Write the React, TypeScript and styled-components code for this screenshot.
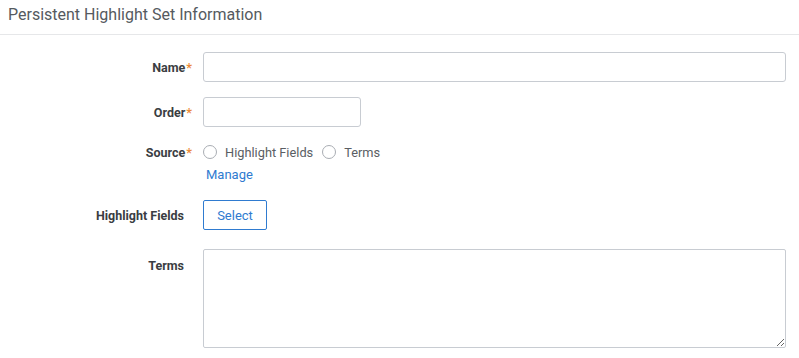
import styled, { createGlobalStyle } from "styled-components";

const GlobalStyle = createGlobalStyle`
  body {
    margin: 0;
    background: #ffffff;
    font-family: Roboto, "Liberation Sans", Arial, sans-serif;
  }
`;

const Page = styled.div`
  width: 799px;
`;

const Header = styled.div`
  height: 35px;
  padding: 0 8px 6px;
  display: flex;
  align-items: center;
  border-bottom: 1px solid #e6e7e9;
  box-sizing: border-box;
  font-size: 16px;
  color: #555a60;
`;

const Form = styled.div`
  padding: 17px 13px 0 0;
  display: flex;
  flex-direction: column;
`;

const Row = styled.div<{ $gap: number; $top?: boolean }>`
  display: grid;
  grid-template-columns: 192px 1fr;
  column-gap: 11px;
  align-items: ${(p) => (p.$top ? "start" : "center")};
  margin-bottom: ${(p) => p.$gap}px;
`;

const Label = styled.div<{ $required?: boolean; $padTop?: number }>`
  text-align: right;
  font-size: 12.5px;
  font-weight: 700;
  color: #3a3d42;
  padding-right: ${(p) => (p.$required ? 0 : 8)}px;
  padding-top: ${(p) => p.$padTop ?? 0}px;
`;

const Star = styled.span`
  color: #ec8a3a;
  margin-left: 1px;
`;

const TextInput = styled.input<{ $width?: number }>`
  box-sizing: border-box;
  height: 30px;
  width: ${(p) => (p.$width ? `${p.$width}px` : "100%")};
  border: 1px solid #c8ccd2;
  border-radius: 3px;
  outline: none;
  padding: 0 8px;
  font: inherit;
`;

const Radios = styled.div`
  display: flex;
  align-items: center;
  height: 20px;
  font-size: 12.8px;
  color: #5a5e64;
`;

const Radio = styled.span`
  width: 14px;
  height: 14px;
  box-sizing: border-box;
  border: 1px solid #a9adb3;
  border-radius: 50%;
  margin-right: 8px;
`;

const RadioText = styled.span`
  margin-right: 9px;
`;

const Link = styled.a`
  color: #2f7bd0;
  font-size: 13px;
  text-decoration: none;
  padding-left: 3px;
  line-height: 16px;
`;

const Button = styled.button`
  box-sizing: border-box;
  width: 64px;
  height: 30px;
  background: #ffffff;
  border: 1px solid #2f7bd0;
  border-radius: 2px;
  color: #2f7bd0;
  font-family: inherit;
  font-size: 13px;
  padding: 0;
`;

const TextArea = styled.textarea`
  box-sizing: border-box;
  width: 100%;
  height: 99px;
  border: 1px solid #c8ccd2;
  border-radius: 2px;
  outline: none;
  display: block;
  font: inherit;
`;

export default function App() {
  return (
    <Page>
      <GlobalStyle />
      <Header>Persistent Highlight Set Information</Header>
      <Form>
        <Row $gap={15}>
          <Label $required>
            Name<Star>*</Star>
          </Label>
          <TextInput />
        </Row>
        <Row $gap={15}>
          <Label $required>
            Order<Star>*</Star>
          </Label>
          <TextInput $width={158} />
        </Row>
        <Row $gap={5}>
          <Label $required>
            Source<Star>*</Star>
          </Label>
          <Radios>
            <Radio />
            <RadioText>Highlight Fields</RadioText>
            <Radio />
            <RadioText>Terms</RadioText>
          </Radios>
        </Row>
        <Row $gap={17}>
          <span />
          <Link href="#">Manage</Link>
        </Row>
        <Row $gap={19}>
          <Label>Highlight Fields</Label>
          <div>
            <Button>Select</Button>
          </div>
        </Row>
        <Row $gap={0} $top>
          <Label $padTop={9}>Terms</Label>
          <TextArea />
        </Row>
      </Form>
    </Page>
  );
}
